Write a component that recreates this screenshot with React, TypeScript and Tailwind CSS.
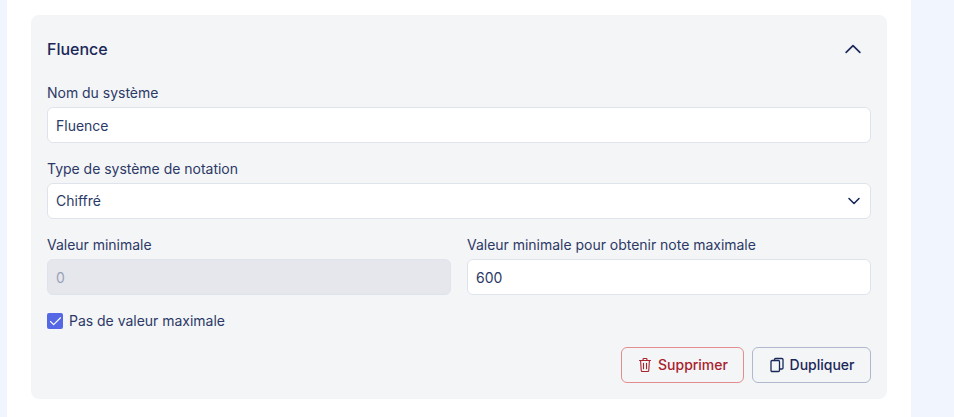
import React from 'react';
import { Check } from 'lucide-react';

const App = () => {
  const labelClass = "block text-sm leading-5 tracking-[-0.02px] text-[#2c3966] mb-1";
  const inputClass = "w-full h-9 rounded-md border border-[#dfe3ec] bg-white px-2 text-sm text-[#2c3966] flex items-center";

  return (
    <div className="h-[417px] overflow-hidden bg-[#f1f5fe] pl-[7px] pr-[43px] font-['Inter',sans-serif]">
      <div className="h-full bg-white pl-6 pr-6 pt-[15px]">
        <div className="h-[384px] rounded-lg bg-[#f4f5f7] px-4">
          {/* Header */}
          <div className="flex h-[68px] items-center justify-between">
            <h2 className="text-base font-medium text-[#1a2859]">Fluence</h2>
            <svg className="mr-[7px] h-[22px] w-[22px] text-[#1a2859]" viewBox="0 0 24 24" fill="none" stroke="currentColor" strokeWidth={1.8} strokeLinecap="round" strokeLinejoin="round">
              <path d="M4.5 15.75l7.5-7.5 7.5 7.5" />
            </svg>
          </div>

          <div>
            <label className={labelClass}>Nom du système</label>
            <div className={inputClass + " pt-0.5"}>Fluence</div>
          </div>

          <div className="mt-4">
            <label className={labelClass}>Type de système de notation</label>
            <div className={inputClass + " justify-between"}>
              <span>Chiffré</span>
              <svg className="-mr-0.5 h-5 w-5 text-[#1a2859]" viewBox="0 0 20 20" fill="none" stroke="currentColor" strokeWidth={1.6} strokeLinecap="round" strokeLinejoin="round">
                <path d="M5 7.5l5 5 5-5" />
              </svg>
            </div>
          </div>

          <div className="mt-4 grid grid-cols-2 gap-4">
            <div>
              <label className={labelClass}>Valeur minimale</label>
              <div className="flex h-9 w-full items-center rounded-md border border-[#dfe3ec] bg-[#e6e7ec] px-2 pt-0.5 text-sm text-[#9aa2b8]">0</div>
            </div>
            <div>
              <label className={labelClass}>Valeur minimale pour obtenir note maximale</label>
              <div className={inputClass + " pt-0.5"}>600</div>
            </div>
          </div>

          <div className="mt-[18px] flex items-center gap-1.5">
            <span className="flex h-4 w-4 items-center justify-center rounded-[2px] bg-[#5468e6]">
              <Check className="h-[15px] w-[15px] text-white" strokeWidth={1.75} />
            </span>
            <span className="text-sm leading-4 tracking-[-0.02px] text-[#2c3966]">Pas de valeur maximale</span>
          </div>

          <div className="mt-[18px] flex justify-end gap-2">
            <button className="flex h-9 w-[123px] items-center justify-center gap-[5px] rounded-md border border-[#e38d8f] text-sm font-medium tracking-[-0.02px] text-[#a8222c]">
              <svg className="h-4 w-4" viewBox="0 0 16 16" fill="none" stroke="currentColor" strokeWidth={1.1} strokeLinecap="round" strokeLinejoin="round">
                <path d="M2.5 3.5h11M6 3.3V2.4c0-.5.4-.9.9-.9h2.2c.5 0 .9.4.9.9v.9M3.6 3.5l.6 9.7c0 .7.6 1.3 1.3 1.3h5c.7 0 1.3-.6 1.3-1.3l.6-9.7M6.5 6.2v5.6M9.5 6.2v5.6" />
              </svg>
              Supprimer
            </button>
            <button className="flex h-9 w-[119px] items-center justify-center gap-[5px] rounded-md border border-[#b0b8ce] text-sm font-medium tracking-[-0.02px] text-[#1a2859]">
              <svg className="h-4 w-4" viewBox="0 0 16 16" fill="none" stroke="currentColor" strokeWidth={1.3} strokeLinecap="round" strokeLinejoin="round">
                <path d="M5.5 3.5V2.6c0-.6.5-1.1 1.1-1.1h6.3c.6 0 1.1.5 1.1 1.1v8.3c0 .6-.5 1.1-1.1 1.1h-2.4" />
                <rect x="2" y="3.5" width="8.5" height="11" rx="1.1" />
              </svg>
              Dupliquer
            </button>
          </div>
        </div>
      </div>
    </div>
  );
};

export default App;
